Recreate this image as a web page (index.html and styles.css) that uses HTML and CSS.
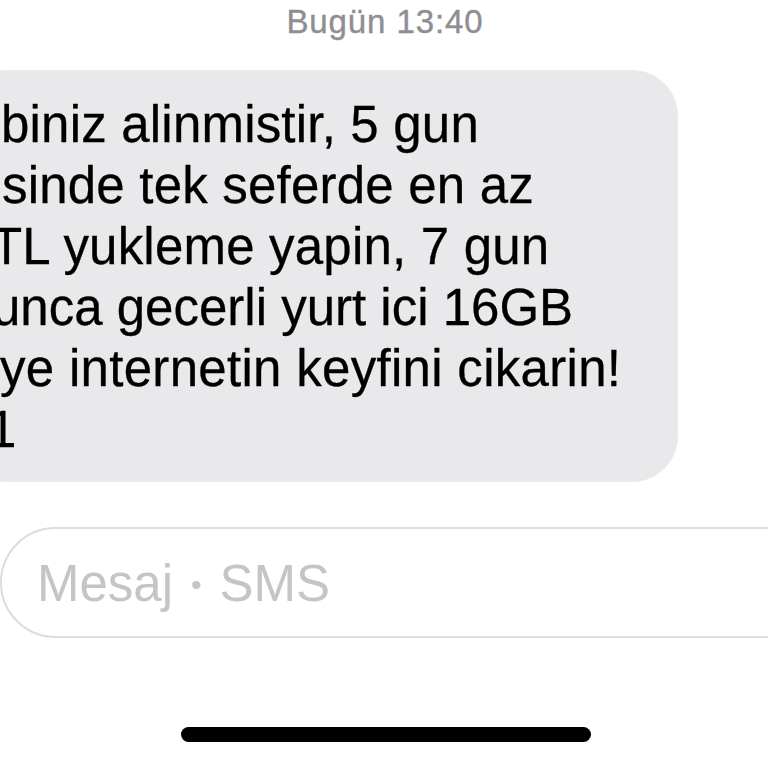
FILE: index.html
```html
<!DOCTYPE html>
<html lang="tr">
<head>
<meta charset="utf-8">
<link rel="stylesheet" href="styles.css">
</head>
<body>
<div class="screen">
  <div class="timestamp">Bugün 13:40</div>
  <div class="bubble">
    <div class="line l1">biniz alinmistir, 5 gun</div>
    <div class="line l2">sinde tek seferde en az</div>
    <div class="line l3">TL yukleme yapin, 7 gun</div>
    <div class="line l4">unca gecerli yurt ici 16GB</div>
    <div class="line l5">ye internetin keyfini cikarin!</div>
    <div class="line l6">1</div>
  </div>
  <div class="composer">
    <span class="placeholder">Mesaj <span class="dot">•</span> SMS</span>
  </div>
  <div class="home-indicator"></div>
</div>
</body>
</html>
```
FILE: styles.css
```css
html, body {
  margin: 0;
  padding: 0;
  background: #ffffff;
}
body {
  width: 768px;
  height: 768px;
  overflow: hidden;
  font-family: "Liberation Sans", Arial, sans-serif;
}
.screen {
  display: flex;
  flex-direction: column;
  width: 768px;
  height: 768px;
  overflow: hidden;
}
.timestamp {
  margin-top: 2px;
  text-align: center;
  font-size: 33px;
  line-height: 40px;
  letter-spacing: 0.9px;
  color: #8e8e93;
  padding-left: 2px;
  -webkit-text-stroke: 0.4px #8e8e93;
}
.bubble {
  margin-top: 28px;
  margin-left: -40px;
  width: 718px;
  box-sizing: border-box;
  padding: 24px 0 22px 40px;
  background: #e9e9eb;
  border-radius: 46px;
  color: #000000;
  font-size: 51px;
  line-height: 61px;
  letter-spacing: 0.2px;
  -webkit-text-stroke: 0.3px #000000;
}
.line {
  white-space: nowrap;
}
.l1 { margin-left: 1px; }
.l2 { margin-left: 2px; }
.l3 { margin-left: -9px; }
.l4 { margin-left: -8px; letter-spacing: 0; }
.l5 { margin-left: 0px; letter-spacing: 0.3px; }
.l6 { margin-left: -12px; }
.composer {
  margin-top: 45px;
  margin-left: 0;
  width: 900px;
  height: 107px;
  box-sizing: content-box;
  border: 2px solid #dcdcde;
  border-radius: 56px;
  display: flex;
  align-items: center;
}
.placeholder {
  margin-left: 35px;
  margin-top: 3px;
  font-size: 51px;
  line-height: 61px;
  color: #c5c5c7;
  white-space: nowrap;
}
.dot {
  display: inline-block;
  font-size: 30px;
  width: 18px;
  text-align: center;
  vertical-align: 6px;
}
.home-indicator {
  margin-top: 89px;
  margin-left: 181px;
  width: 410px;
  height: 15px;
  border-radius: 8px;
  background: #000000;
}
```
